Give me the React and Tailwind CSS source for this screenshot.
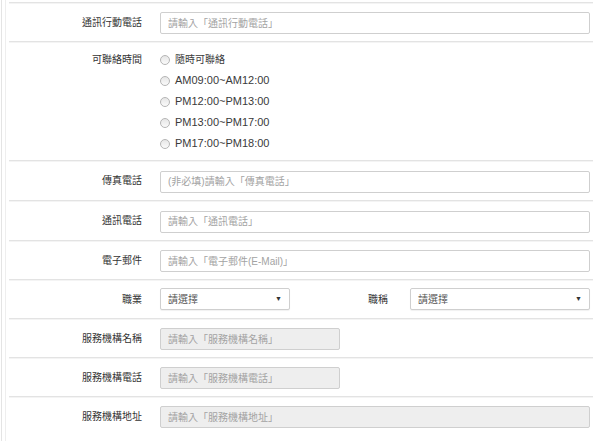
import { useState } from 'react'

const cjk = "font-['Liberation_Sans','Noto_Sans_CJK_TC',sans-serif]"

function Row({ label, h = 'h-[39px]', align = 'items-center', children }) {
  return (
    <div className={`flex ${align} ${h} border-t border-[#e3e3e3] shadow-[inset_0_1px_0_#f4f4f4]`}>
      <div className="w-[134px] shrink-0 pr-[1px] text-right text-[10px] text-[#333]">{label}</div>
      <div className="flex-1 pl-[17px] pr-[3px]">{children}</div>
    </div>
  )
}

function TextInput({ placeholder, disabled, width = 'w-full' }) {
  return (
    <input
      disabled={disabled}
      placeholder={placeholder}
      className={`${width} h-[22px] px-[7px] text-[10px] border border-[#cfcfcf] rounded-[2px] placeholder:text-[#a3a3a3] outline-none ${
        disabled ? 'bg-[#eeeeee]' : 'bg-white'
      }`}
    />
  )
}

function Select({ width }) {
  return (
    <div className={`${width} h-[22px] flex items-center justify-between px-[7px] border border-[#cfcfcf] rounded-[2px] bg-white shadow-[0_1px_1px_rgba(0,0,0,0.06)]`}>
      <span className="text-[10px] text-[#555]">請選擇</span>
      <span className="text-[7px] text-[#333]">▼</span>
    </div>
  )
}

const times = ['隨時可聯絡', 'AM09:00~AM12:00', 'PM12:00~PM13:00', 'PM13:00~PM17:00', 'PM17:00~PM18:00']

export default function App() {
  const [picked, setPicked] = useState(null)

  return (
    <div className={`${cjk} w-[600px] h-[441px] bg-white overflow-hidden`}>
      <div className="h-full ml-px border-l border-[#e4e4e4]">
        <div className="h-full ml-[3px] border-l border-[#eeeeee] pl-[3px] pr-[7px] pt-[2px]">
          <Row label="通訊行動電話">
            <TextInput placeholder="請輸入「通訊行動電話」" />
          </Row>

          <Row label={<div className="h-[21px] leading-[21px]">可聯絡時間</div>} h="h-[119px] pt-[7px]" align="items-start">
            <div className="flex flex-col">
              {times.map((t, i) => (
                <label key={t} className="h-[21px] flex items-center gap-[5px] cursor-pointer" onClick={() => setPicked(i)}>
                  <span className="w-[10px] h-[10px] rounded-full border border-[#b5b5b5] bg-gradient-to-b from-[#e6e6e6] to-[#fafafa] flex items-center justify-center">
                    {picked === i && <span className="w-[4px] h-[4px] rounded-full bg-[#333]" />}
                  </span>
                  <span className={`${/^[AP]M/.test(t) ? 'text-[11px]' : 'text-[10px]'} text-[#3a3a3a]`}>{t}</span>
                </label>
              ))}
            </div>
          </Row>

          <Row label="傳真電話" h="h-[40px]">
            <TextInput placeholder="(非必填)請輸入「傳真電話」" />
          </Row>
          <Row label="通訊電話" h="h-[40px]">
            <TextInput placeholder="請輸入「通訊電話」" />
          </Row>
          <Row label="電子郵件">
            <TextInput placeholder="請輸入「電子郵件(E-Mail)」" />
          </Row>

          <Row label="職業">
            <div className="flex items-center">
              <Select width="w-[130px]" />
              <div className="w-[120px] text-right pr-[22px] text-[10px] text-[#333]">職稱</div>
              <Select width="flex-1" />
            </div>
          </Row>

          <Row label="服務機構名稱">
            <TextInput placeholder="請輸入「服務機構名稱」" disabled width="w-[180px]" />
          </Row>
          <Row label="服務機構電話">
            <TextInput placeholder="請輸入「服務機構電話」" disabled width="w-[180px]" />
          </Row>
          <Row label="服務機構地址">
            <TextInput placeholder="請輸入「服務機構地址」" disabled />
          </Row>
        </div>
      </div>
    </div>
  )
}
